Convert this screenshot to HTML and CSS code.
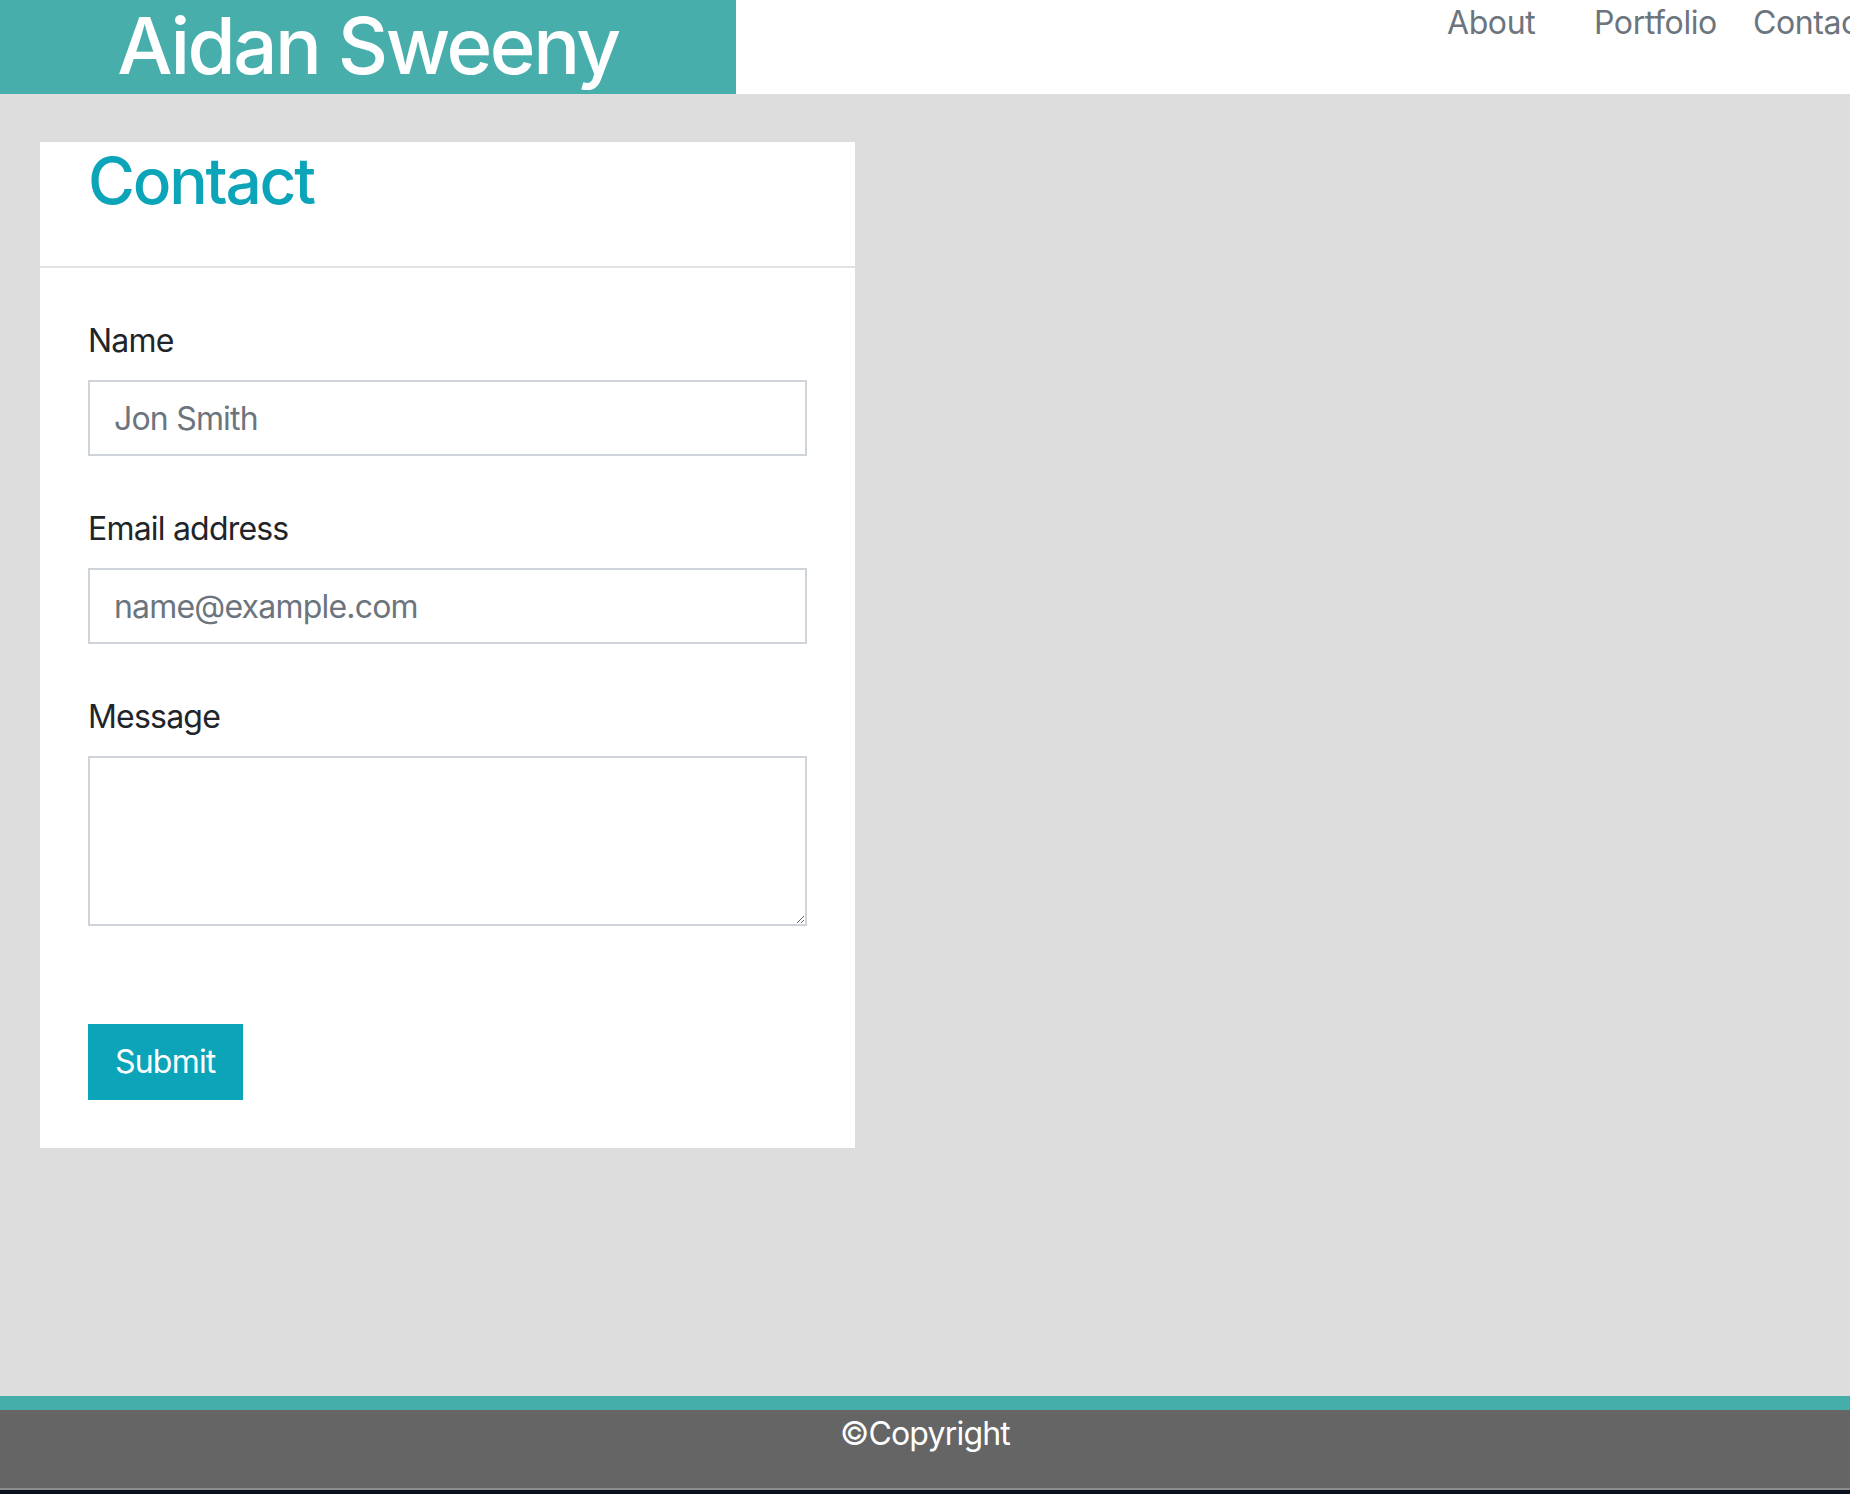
FILE: index.html
```html
<!DOCTYPE html>
<html lang="en">
<head>
<meta charset="utf-8">
<title>Aidan Sweeny - Contact</title>
<link rel="stylesheet" href="styles.css">
</head>
<body>
<header class="site-header">
  <div class="brand"><h1 class="brand-name">Aidan Sweeny</h1></div>
  <nav class="site-nav">
    <a class="nav-link nav-about" href="#">About</a>
    <a class="nav-link nav-portfolio" href="#">Portfolio</a>
    <a class="nav-link nav-contact" href="#">Contact</a>
  </nav>
</header>
<main class="main">
  <section class="card">
    <div class="card-header"><h2 class="card-title">Contact</h2></div>
    <form class="card-body">
      <div class="form-group">
        <label class="form-label" for="name">Name</label>
        <input class="form-control" id="name" type="text" placeholder="Jon Smith">
      </div>
      <div class="form-group">
        <label class="form-label" for="email">Email address</label>
        <input class="form-control" id="email" type="email" placeholder="name@example.com">
      </div>
      <div class="form-group">
        <label class="form-label" for="msg">Message</label>
        <textarea class="form-control form-textarea" id="msg"></textarea>
      </div>
      <button class="btn" type="button">Submit</button>
    </form>
  </section>
</main>
<footer class="site-footer"><p class="copyright">©Copyright</p></footer>
<div class="desk"></div>
</body>
</html>
```
FILE: styles.css
```css
html, body {
  margin: 0;
  padding: 0;
}
body {
  font-family: Inter, "Liberation Sans", sans-serif;
  font-size: 32px;
  line-height: 48px;
  letter-spacing: -0.8px;
  background: #dddddd;
  color: #212529;
  min-height: 100vh;
  display: flex;
  flex-direction: column;
  overflow: hidden;
}
.site-header {
  display: flex;
  height: 94px;
  background: #ffffff;
  overflow: hidden;
  flex: none;
}
.brand {
  width: 736px;
  height: 94px;
  background: #47aeac;
  display: flex;
  justify-content: center;
  align-items: flex-start;
  overflow: hidden;
  flex: none;
}
.brand-name {
  margin: -2px 0 0;
  font-size: 78px;
  line-height: 96px;
  font-weight: 500;
  color: #ffffff;
  letter-spacing: -2.5px;
  white-space: nowrap;
}
.site-nav {
  display: flex;
  margin-left: 711px;
  padding-top: 3px;
  flex: none;
}
.nav-link {
  color: #6c757d;
  text-decoration: none;
  font-size: 32px;
  line-height: 40px;
  white-space: nowrap;
  letter-spacing: -0.4px;
}
.nav-about { width: 147px; }
.nav-portfolio { width: 159px; }
.main {
  flex: 1;
  padding: 48px 40px;
}
.card {
  width: 815px;
  background: #ffffff;
}
.card-header {
  height: 124px;
  padding: 0 48px;
  border-bottom: 2px solid #e3e3e3;
}
.card-title {
  margin: 0;
  font-size: 64px;
  line-height: 77px;
  font-weight: 500;
  color: #0ba4b9;
  letter-spacing: -2.2px;
}
.card-body {
  padding: 48px;
  display: flex;
  flex-direction: column;
  align-items: flex-start;
}
.form-group {
  width: 100%;
  margin-bottom: 48px;
}
.form-label {
  display: block;
  margin-bottom: 16px;
  padding-top: 2px;
  line-height: 46px;
}
.form-control {
  display: block;
  box-sizing: border-box;
  width: 100%;
  height: 76px;
  margin: 0;
  padding: 12px 24px;
  border: 2px solid #ced4da;
  border-radius: 0;
  font-family: Inter, "Liberation Sans", sans-serif;
  font-size: 32px;
  line-height: 48px;
  letter-spacing: -0.8px;
  color: #495057;
  background: #ffffff;
  outline: none;
}
.form-control::placeholder {
  color: #6c757d;
  opacity: 1;
}
.form-textarea {
  height: 170px;
  resize: vertical;
}
.btn {
  margin-top: 50px;
  height: 76px;
  padding: 12px 25px;
  border: 2px solid #0ba4b9;
  border-radius: 0;
  background: #0ba4b9;
  color: #ffffff;
  font-family: Inter, "Liberation Sans", sans-serif;
  font-size: 32px;
  line-height: 48px;
  letter-spacing: -0.8px;
  cursor: pointer;
}
.site-footer {
  flex: none;
  background: #656565;
  border-top: 14px solid #45adaa;
  border-bottom: 2px solid #8b8b8b;
  text-align: center;
}
.copyright {
  margin: 0 0 30px;
  color: #ffffff;
  line-height: 48px;
}
.desk {
  flex: none;
  height: 4px;
  background: #0b111c;
}
```
